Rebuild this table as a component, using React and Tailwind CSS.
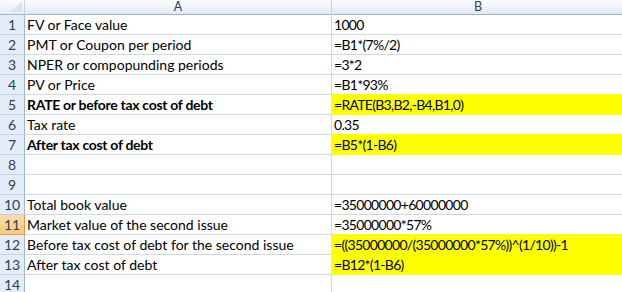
import React from "react";

const rows = [
  { a: "FV or Face value", b: "1000" },
  { a: "PMT or Coupon per period", b: "=B1*(7%/2)" },
  { a: "NPER or compopunding periods", b: "=3*2" },
  { a: "PV or Price", b: "=B1*93%" },
  { a: "RATE or before tax cost of debt", b: "=RATE(B3,B2,-B4,B1,0)", bold: true, fill: true },
  { a: "Tax rate", b: "0.35" },
  { a: "After tax cost of debt", b: "=B5*(1-B6)", bold: true, fill: true },
  { a: "", b: "" },
  { a: "", b: "" },
  { a: "Total book value", b: "=35000000+60000000" },
  { a: "Market value of the second issue", b: "=35000000*57%", sel: true },
  { a: "Before tax cost of debt for the second issue", b: "=((35000000/(35000000*57%))^(1/10))-1", fill: true },
  { a: "After tax cost of debt", b: "=B12*(1-B6)", fill: true },
  { a: "", b: "" },
];

export default function App() {
  return (
    <div
      className="w-[622px] h-[292px] overflow-hidden bg-white text-black"
      style={{ fontFamily: "Lato, 'Liberation Sans', sans-serif" }}
    >
      <div className="w-[625px] flex flex-col text-[14px]">
        {/* header */}
        <div className="flex h-[15px] text-[12.5px]">
          <div className="relative w-[25px] h-[15px] border-r border-b border-r-[#c8d2e0] border-b-[#9eb6ce] bg-gradient-to-b from-[#f9fcfd] to-[#e4ebf4]">
            <svg className="absolute right-[2px] bottom-[2px]" width="12" height="11" viewBox="0 0 12 11">
              <polygon points="12,0 12,11 0,11" fill="#dce2ea" />
            </svg>
          </div>
          <div className="w-[307px] h-[15px] border-r border-b border-r-[#c8d2e0] border-b-[#9eb6ce] bg-gradient-to-b from-[#f9fcfd] via-[#f1f5fa] to-[#dfe7f2] flex justify-center text-[#2f3f55] leading-[14px]">
            A
          </div>
          <div className="w-[293px] h-[15px] border-r border-b border-r-[#c8d2e0] border-b-[#9eb6ce] bg-gradient-to-b from-[#f9fcfd] via-[#f1f5fa] to-[#dfe7f2] flex justify-center text-[#2f3f55] leading-[14px]">
            B
          </div>
        </div>
        {rows.map((r, i) => {
          const next = rows[i + 1];
          const bottomYellow = r.fill || (next && next.fill);
          return (
            <div key={i} className="flex h-[20px]">
              <div
                className={
                  "w-[25px] h-[20px] border-r border-b flex justify-center leading-[19px] " +
                  (r.sel
                    ? "bg-gradient-to-b from-[#fbdca6] to-[#f8c97a] border-r-[#f29436] border-b-[#f29436] text-[#2f3f55]"
                    : "bg-[#e4ecf7] border-r-[#9eb6ce] border-b-[#c5d2e3] text-[#2f3f55]")
                }
              >
                {i + 1}
              </div>
              <div
                className={
                  "w-[307px] h-[20px] border-b border-r border-b-[#d0d7e5] pl-[2px] leading-[19px] whitespace-nowrap " +
                  (r.fill ? "border-r-[#ffff00] " : "border-r-[#d0d7e5] ") +
                  (r.bold ? "font-bold tracking-[-0.3px]" : "")
                }
              >
                {r.a}
              </div>
              <div
                className={
                  "w-[293px] h-[20px] border-b pl-[2px] leading-[19px] whitespace-nowrap tracking-[-0.7px] " +
                  (r.fill ? "bg-[#ffff00] " : "") +
                  (bottomYellow ? "border-b-[#ffff00]" : "border-b-[#d0d7e5]")
                }
              >
                {r.b}
              </div>
            </div>
          );
        })}
      </div>
    </div>
  );
}
